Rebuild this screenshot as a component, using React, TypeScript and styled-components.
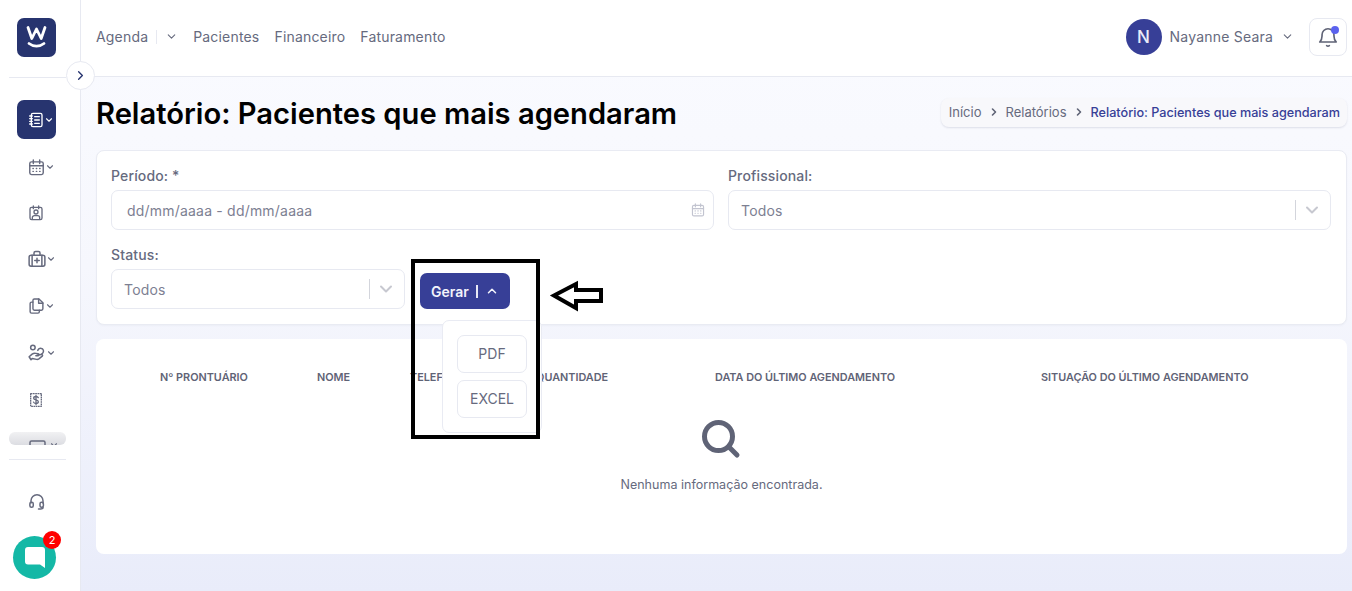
import React from "react";
import styled, { createGlobalStyle } from "styled-components";
import { ChevronDown, ChevronRight, ChevronUp } from "lucide-react";

const Global = createGlobalStyle`
  html, body { margin: 0; padding: 0; height: 100%; overflow: hidden; background: #fff; }
  body { font-family: Inter, "Liberation Sans", sans-serif; color: #666a7e; }
  * { box-sizing: border-box; }
`;

const Page = styled.div`
  position: relative;
  display: flex;
  width: 1352px;
  height: 591px;
  overflow: hidden;
`;

const Sidebar = styled.aside`
  width: 81px;
  height: 591px;
  flex: none;
  border-right: 1px solid #e7e9f1;
  background: #fff;
  display: flex;
  flex-direction: column;
  padding-top: 18px;
`;

const Logo = styled.div`
  width: 39px;
  height: 39px;
  margin-left: 17px;
  border-radius: 7px;
  background: #27346f;
  display: flex;
  align-items: center;
  justify-content: center;
  flex: none;
`;

const Rule = styled.div<{ $top: number; $bottom?: number }>`
  width: 57px;
  height: 1px;
  margin: ${(p) => p.$top}px 0 ${(p) => p.$bottom ?? 0}px 9px;
  background: #e7e9f1;
  flex: none;
`;

const NavItem = styled.div<{ $active?: boolean; $h: number; $top?: number }>`
  width: 39px;
  height: ${(p) => p.$h}px;
  margin: ${(p) => p.$top ?? 0}px 0 0 17px;
  flex: none;
  border-radius: 7px;
  display: flex;
  align-items: center;
  padding-left: 11px;
  color: ${(p) => (p.$active ? "#fff" : "#666a7e")};
  background: ${(p) => (p.$active ? "#27346f" : "transparent")};
`;

const Fade = styled.div`
  width: 57px;
  height: 13px;
  margin: 9px 0 0 9px;
  flex: none;
  overflow: hidden;
  display: flex;
  align-items: flex-start;
  gap: 3px;
  background: linear-gradient(#f1f1f3, #dcdde2);
  padding: 8px 0 0 20px;
  border-radius: 6px;
  color: #666a7e;
`;

const Main = styled.div`
  flex: 1;
  min-width: 0;
  display: flex;
  flex-direction: column;
  background: linear-gradient(#fafbff, #f6f7fd 45%, #e9ecfa);
`;

const Header = styled.header`
  height: 77px;
  flex: none;
  background: #fff;
  border-bottom: 1px solid #e7e9f1;
  display: flex;
  align-items: center;
  padding: 0 5px 3px 15px;
`;

const Menu = styled.nav`
  display: flex;
  align-items: center;
  flex: 1;
  font-size: 14px;
  color: #666a7e;
  letter-spacing: 0.18px;
`;

const MenuLink = styled.span`
  display: flex;
  margin-right: 15px;
`;

const MenuChevron = styled.span`
  display: flex;
  margin: 0 15px 0 -1px;
`;

const MenuDivider = styled.span`
  width: 1px;
  height: 14px;
  background: #e7e9f1;
  margin: 0 9px 0 8px;
`;

const User = styled.div`
  display: flex;
  align-items: center;
  font-size: 14px;
  letter-spacing: 0.2px;
  color: #666a7e;
  margin-right: 15px;
`;

const Avatar = styled.div`
  width: 36px;
  height: 36px;
  border-radius: 50%;
  background: #373f97;
  color: #e9ebf8;
  font-size: 17px;
  font-weight: 500;
  display: flex;
  align-items: center;
  justify-content: center;
  margin-right: 8px;
`;

const UserCaret = styled.span`
  display: flex;
  margin-left: 8px;
`;

const BellBox = styled.div`
  position: relative;
  width: 38px;
  height: 38px;
  border: 1px solid #e7e9f1;
  border-radius: 8px;
  display: flex;
  align-items: center;
  justify-content: center;
`;

const BellDot = styled.span`
  position: absolute;
  top: 7px;
  right: 7px;
  width: 8px;
  height: 8px;
  border-radius: 50%;
  background: #5b62ee;
`;

const Content = styled.div`
  padding: 0 5px 0 15px;
  display: flex;
  flex-direction: column;
`;

const TitleRow = styled.div`
  height: 73px;
  display: flex;
  align-items: center;
  justify-content: space-between;
`;

const Title = styled.h1`
  margin: 0;
  font-size: 29.15px;
  font-weight: 600;
  color: #000;
  line-height: 1;
`;

const Crumbs = styled.div`
  height: 29px;
  margin-bottom: 3px;
  padding: 0 7px 0 8px;
  display: flex;
  align-items: center;
  border-radius: 8px;
  background: #f8f8fb;
  box-shadow: 0 1px 2px rgba(60, 64, 100, 0.14);
  font-size: 13px;
  color: #666a7e;
`;

const Crumb = styled.span<{ $current?: boolean }>`
  color: ${(p) => (p.$current ? "#373f97" : "#666a7e")};
  font-weight: ${(p) => (p.$current ? 500 : 400)};
  font-size: ${(p) => (p.$current ? "12.65px" : "13px")};
`;

const CrumbIcon = styled.span`
  display: flex;
  margin: 0 6px;
  color: #5f6376;
`;

const FilterCard = styled.section`
  height: 175px;
  border: 1px solid #e9ebf3;
  border-radius: 8px;
  background: #fff;
  padding: 16px 15px 0 14px;
  display: flex;
  flex-direction: column;
  gap: 16px;
  box-shadow: 0 1px 2px rgba(60, 64, 100, 0.04);
`;

const FieldRow = styled.div`
  display: flex;
  gap: 14px;
`;

const Field = styled.div<{ $w?: number }>`
  ${(p) => (p.$w ? `width: ${p.$w}px; flex: none;` : "flex: 1;")}
  display: flex;
  flex-direction: column;
`;

const Label = styled.label`
  font-size: 14px;
  font-weight: 500;
  letter-spacing: 0.14px;
  line-height: 17px;
  color: #666a7e;
  margin-bottom: 6px;
`;

const Input = styled.div<{ $pad: number }>`
  height: 40px;
  border: 1px solid #e7e9f1;
  border-radius: 7px;
  background: #fff;
  display: flex;
  align-items: center;
  justify-content: space-between;
  padding: 0 9px 0 ${(p) => p.$pad}px;
  font-size: 14px;
  letter-spacing: 0.2px;
  color: #7d8092;
`;

const DateIcon = styled.span`
  display: flex;
  margin-right: -1px;
  color: #c2c4d0;
`;

const SelectTail = styled.span`
  display: flex;
  align-items: center;
  gap: 6px;
  margin-right: -1px;
  color: #c7c8d0;
`;

const TailBar = styled.span`
  width: 1px;
  height: 20px;
  background: #d3d5dc;
`;

const StatusRow = styled.div`
  display: flex;
  align-items: flex-start;
`;

const GenerateButton = styled.button`
  margin: 27px 0 0 15px;
  width: 90px;
  height: 36px;
  border: 0;
  border-radius: 7px;
  background: #373f97;
  color: #f2f3fb;
  font-family: inherit;
  font-size: 14px;
  font-weight: 600;
  display: flex;
  align-items: center;
  padding: 0 0 0 11px;
`;

const BtnBar = styled.span`
  width: 2px;
  height: 13px;
  margin: 0 7px 0 7px;
  background: #e8e9f5;
`;

const TableCard = styled.section`
  margin-top: 14px;
  height: 215px;
  border-radius: 8px;
  background: #fff;
  display: flex;
  flex-direction: column;
  align-items: center;
`;

const TableHead = styled.div`
  align-self: stretch;
  display: grid;
  grid-template-columns: 157px 93px 126px 179px 326px 1fr;
  padding: 31px 0 0 64px;
  font-size: 10.85px;
  font-weight: 600;
  line-height: 14px;
  color: #5f6376;
  white-space: nowrap;
`;

const Empty = styled.div`
  margin-top: 34px;
  display: flex;
  flex-direction: column;
  align-items: center;
  font-size: 12.5px;
  letter-spacing: 0.02px;
  color: #666a7e;
`;

const EmptyText = styled.span`
  margin-top: 17px;
  line-height: 16px;
`;

const ToggleButton = styled.div`
  position: absolute;
  left: 66px;
  top: 61px;
  width: 29px;
  height: 29px;
  border-radius: 50%;
  border: 1px solid #e7e9f1;
  background: #fff;
  display: flex;
  align-items: center;
  justify-content: center;
  color: #27346f;
`;

const Dropdown = styled.div`
  position: absolute;
  left: 442px;
  top: 320px;
  width: 100px;
  height: 113px;
  border: 1px solid #e9ebf3;
  border-radius: 7px;
  background: #fff;
  padding: 14px 0 0 14px;
  display: flex;
  flex-direction: column;
  gap: 7px;
`;

const DropItem = styled.div`
  width: 70px;
  height: 38px;
  border: 1px solid #e7e9f1;
  border-radius: 7px;
  padding-bottom: 1px;
  display: flex;
  align-items: center;
  justify-content: center;
  font-size: 14px;
  color: #666a7e;
`;

const Annotation = styled.div`
  position: absolute;
  left: 411px;
  top: 259px;
  width: 129px;
  height: 180px;
  border: 4px solid #000;
  pointer-events: none;
`;

const ArrowMark = styled.svg`
  position: absolute;
  left: 549px;
  top: 280px;
`;

const Chat = styled.div`
  position: absolute;
  left: 13px;
  top: 536px;
  width: 43px;
  height: 43px;
  border-radius: 50%;
  background: #14b8a6;
  display: flex;
  align-items: center;
  justify-content: center;
`;

const ChatBadge = styled.span`
  position: absolute;
  right: -5px;
  top: -5px;
  width: 18px;
  height: 18px;
  border-radius: 50%;
  background: #f00;
  color: #fff;
  font-size: 11px;
  display: flex;
  align-items: center;
  justify-content: center;
`;

type IconProps = { children: React.ReactNode; w?: number; h?: number };
const Ico = ({ children, w = 17, h = 18 }: IconProps) => (
  <svg width={w} height={h} viewBox="0 0 24 24" fill="none" stroke="currentColor" strokeWidth="2" strokeLinecap="round" strokeLinejoin="round" style={{ flex: "none" }}>
    {children}
  </svg>
);

const Caret = () => <ChevronDown size={10} strokeWidth={2.6} style={{ flex: "none" }} />;

const Notebook = () => (
  <Ico w={16} h={18}>
    <rect x="5" y="2" width="16" height="20" rx="2.5" />
    <path d="M10 7h7M10 12h7M10 17h7M2.5 6h4M2.5 10h4M2.5 14h4M2.5 18h4" />
  </Ico>
);
const Calendar = ({ size = 17 }: { size?: number }) => (
  <Ico w={size} h={size}>
    <rect x="2.5" y="4" width="19" height="18" rx="2.5" />
    <path d="M7.5 1.5v5M16.5 1.5v5M2.5 9.5h19M7 13.500h.5M11.800 13.500h.5M16.500 13.500h.5M7 17.500h.5M11.800 17.500h.5M16.500 17.500h.5" />
  </Ico>
);
const Badge = () => (
  <Ico w={16} h={18}>
    <rect x="3" y="3.5" width="18" height="18.5" rx="2.5" />
    <path d="M8 1.5v4M16 1.5v4" />
    <circle cx="12" cy="10.5" r="3" />
    <path d="M6.5 21.5v-2.5a3 3 0 0 1 3-3h5a3 3 0 0 1 3 3v2.5" />
  </Ico>
);
const Kit = () => (
  <Ico w={18} h={18}>
    <rect x="1.5" y="7" width="21" height="14.5" rx="2.5" />
    <path d="M8 7V4a2 2 0 0 1 2-2h4a2 2 0 0 1 2 2v3M5.500 7v14.500M18.500 7v14.500M12 11v6M9 14h6" />
  </Ico>
);
const Files = () => (
  <Ico w={17} h={18}>
    <path d="M9 2h6.500L21 7.500V16a2 2 0 0 1-2 2H9a2 2 0 0 1-2-2V4a2 2 0 0 1 2-2z" />
    <path d="M15 2v6h6" />
    <path d="M7 6.500H5a2 2 0 0 0-2 2V20a2 2 0 0 0 2 2h9a2 2 0 0 0 2-2v-2" />
  </Ico>
);
const HandPerson = () => (
  <Ico w={18} h={18}>
    <circle cx="6.500" cy="4.500" r="3" />
    <path d="M13 8.500c1-2.500 3.500-3 5-2.500 2 .5 3 2.500 2.500 4.500-.3 1.200-1.300 2.300-2.500 3" />
    <path d="M1.500 17l4-3.500c1.500-1 3-1.300 5-1l3 .5c1.500.3 1.500 2.500 0 2.500h-3l7-1.500c1.500-.3 2.500 1 1.500 2.200l-4.500 3.600c-1 .7-2 .9-3 .7l-6-1.200-1.500 1.700z" />
  </Ico>
);
const Receipt = () => (
  <Ico w={16} h={18}>
    <path d="M4 2.500h16v19H4z" strokeDasharray="2.600 .8" strokeLinecap="butt" />
    <path d="M15.500 8.500c-.5-1.200-1.800-1.800-3.500-1.800-2 0-3.500 1-3.500 2.600 0 3.400 7 1.800 7 5.200 0 1.600-1.500 2.700-3.500 2.700-1.800 0-3.200-.7-3.700-2M12 5v14" />
  </Ico>
);
const Headset = () => (
  <Ico w={18} h={19}>
    <path d="M4 14v-3a8 8 0 0 1 16 0v3" />
    <rect x="2.500" y="13" width="4.500" height="6.500" rx="2" />
    <rect x="16" y="13" width="4.500" height="6.500" rx="2" />
    <path d="M20 19.500c0 1.800-1.500 2.500-3 2.500h-3" />
  </Ico>
);
const Bell = () => (
  <svg width="22" height="22" viewBox="0 0 24 24" fill="none" stroke="#5f6376" strokeWidth="1.800" strokeLinecap="round" strokeLinejoin="round">
    <path d="M3 17.500h18c-1.800-1.800-2.500-3.500-2.500-6.500V9.500a6.500 6.500 0 0 0-13 0V11c0 3-.7 4.700-2.500 6.500z" />
    <path d="M10.500 21.500c.9.700 2.100.7 3 0" />
  </svg>
);

const columns = ["Nº PRONTUÁRIO", "NOME", "TELEFONE", "QUANTIDADE", "DATA DO ÚLTIMO AGENDAMENTO", "SITUAÇÃO DO ÚLTIMO AGENDAMENTO"];

const SelectCaret = () => (
  <SelectTail>
    <TailBar />
    <ChevronDown size={20} strokeWidth={2.4} />
  </SelectTail>
);

export default function App() {
  return (
    <Page>
      <Global />
      <Sidebar>
        <Logo>
          <svg width="27" height="27" viewBox="0 0 27 27" fill="none" stroke="#fff" strokeLinecap="round" strokeLinejoin="round">
            <path d="M5 3.500l3.800 11L13.500 5l4.700 9.500L22 3.500" strokeWidth="2.800" />
            <path d="M6 19.500c4.500 3.500 10.500 3.500 15 0" strokeWidth="2.800" />
          </svg>
        </Logo>
        <Rule $top={20} $bottom={22} />
        <NavItem $active $h={39}><Notebook /><Caret /></NavItem>
        <NavItem $h={46} $top={5}><Calendar /><Caret /></NavItem>
        <NavItem $h={46}><Badge /></NavItem>
        <NavItem $h={46}><Kit /><Caret /></NavItem>
        <NavItem $h={47}><Files /><Caret /></NavItem>
        <NavItem $h={47}><HandPerson /><Caret /></NavItem>
        <NavItem $h={47}><Receipt /></NavItem>
        <Fade>
          <svg width="17" height="8" viewBox="0 0 17 8" fill="none" stroke="currentColor" strokeWidth="1.500" style={{ flex: "none" }}>
            <rect x="1" y="1" width="15" height="12" rx="1.500" />
          </svg>
          <ChevronDown size={10} strokeWidth={2.6} style={{ flex: "none" }} />
        </Fade>
        <Rule $top={14} />
        <NavItem $h={42} $top={20}><Headset /></NavItem>
      </Sidebar>
      <Main>
        <Header>
          <Menu>
            <span>Agenda</span>
            <MenuDivider />
            <MenuChevron><ChevronDown size={13} strokeWidth={2} /></MenuChevron>
            <MenuLink>Pacientes</MenuLink>
            <MenuLink>Financeiro</MenuLink>
            <MenuLink>Faturamento</MenuLink>
          </Menu>
          <User>
            <Avatar>N</Avatar>
            Nayanne Seara
            <UserCaret><ChevronDown size={13} strokeWidth={2} /></UserCaret>
          </User>
          <BellBox><Bell /><BellDot /></BellBox>
        </Header>
        <Content>
          <TitleRow>
            <Title>Relatório: Pacientes que mais agendaram</Title>
            <Crumbs>
              <Crumb>Início</Crumb>
              <CrumbIcon><ChevronRight size={12} strokeWidth={3.2} /></CrumbIcon>
              <Crumb>Relatórios</Crumb>
              <CrumbIcon><ChevronRight size={12} strokeWidth={3.2} /></CrumbIcon>
              <Crumb $current>Relatório: Pacientes que mais agendaram</Crumb>
            </Crumbs>
          </TitleRow>
          <FilterCard>
            <FieldRow>
              <Field>
                <Label>Período: *</Label>
                <Input $pad={15}>
                  dd/mm/aaaa - dd/mm/aaaa
                  <DateIcon><Calendar size={14} /></DateIcon>
                </Input>
              </Field>
              <Field>
                <Label>Profissional:</Label>
                <Input $pad={12}>
                  Todos
                  <SelectCaret />
                </Input>
              </Field>
            </FieldRow>
            <StatusRow>
              <Field $w={294}>
                <Label>Status:</Label>
                <Input $pad={12}>
                  Todos
                  <SelectCaret />
                </Input>
              </Field>
              <GenerateButton>
                Gerar
                <BtnBar />
                <ChevronUp size={14} strokeWidth={2.6} />
              </GenerateButton>
            </StatusRow>
          </FilterCard>
          <TableCard>
            <TableHead>
              {columns.map((c) => <span key={c}>{c}</span>)}
            </TableHead>
            <Empty>
              <svg width="42" height="42" viewBox="0 0 42 42" fill="none" stroke="#5f6376" strokeLinecap="round">
                <circle cx="18.500" cy="18.500" r="14" strokeWidth="5" />
                <path d="M29 29l8 8" strokeWidth="5" />
              </svg>
              <EmptyText>Nenhuma informação encontrada.</EmptyText>
            </Empty>
          </TableCard>
        </Content>
      </Main>
      <ToggleButton><ChevronRight size={15} strokeWidth={2.2} /></ToggleButton>
      <Dropdown>
        <DropItem>PDF</DropItem>
        <DropItem>EXCEL</DropItem>
      </Dropdown>
      <Annotation />
      <ArrowMark width="56" height="32" viewBox="0 0 56 32" fill="none" stroke="#000" strokeWidth="4" strokeLinejoin="miter">
        <path d="M5 15.500L27 4v6h25v11H27v7z" />
      </ArrowMark>
      <Chat>
        <svg width="20" height="21" viewBox="0 0 20 21" fill="#fff"><path d="M3 0h14a3 3 0 0 1 3 3v18l-5-3.500H3a3 3 0 0 1-3-3V3a3 3 0 0 1 3-3z" /></svg>
        <ChatBadge>2</ChatBadge>
      </Chat>
    </Page>
  );
}
